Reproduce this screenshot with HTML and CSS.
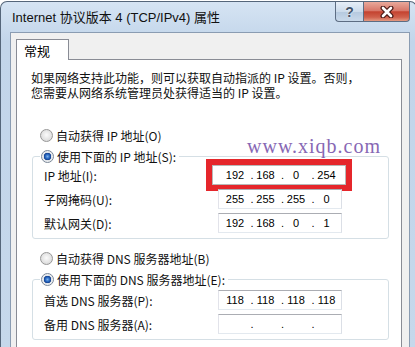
FILE: index.html
```html
<!DOCTYPE html>
<html lang="zh-CN">
<head>
    <meta charset="UTF-8">
    <title>Internet 协议版本 4 (TCP/IPv4) 属性</title>
    <link rel="stylesheet" href="styles.css">
</head>
<body>
    <div class="window">
        <div class="titlebar">
            <span class="title">Internet 协议版本 4 (TCP/IPv4) 属性</span>
            <div class="caption-btns">
                <div class="cap help">?</div>
                <div class="cap close">
                    <svg width="14" height="12" viewBox="0 0 14 12">
                        <path d="M3 2 L11 10 M11 2 L3 10" stroke="#4a1a16" stroke-width="5" stroke-linecap="round"/>
                        <path d="M3 2 L11 10 M11 2 L3 10" stroke="#fff" stroke-width="2.6" stroke-linecap="round"/>
                    </svg>
                </div>
            </div>
        </div>

        <div class="dialog">
            <div class="tabs">
                <div class="tab">常规</div>
            </div>
            <div class="panel">
                <p class="intro">如果网络支持此功能，则可以获取自动指派的 IP 设置。否则，<br>您需要从网络系统管理员处获得适当的 IP 设置。</p>

                <div class="radio-row"><span class="radio"></span>自动获得 IP 地址(O)</div>
                <fieldset class="group">
                    <legend><span class="radio checked"></span>使用下面的 IP 地址(S):</legend>
                    <div class="field-row">
                        <label>IP 地址(I):</label>
                        <div class="ip-box marked"><span>192</span><i>.</i><span>168</span><i>.</i><span>0</span><i>.</i><span>254</span></div>
                    </div>
                    <div class="field-row">
                        <label>子网掩码(U):</label>
                        <div class="ip-box"><span>255</span><i>.</i><span>255</span><i>.</i><span>255</span><i>.</i><span>0</span></div>
                    </div>
                    <div class="field-row">
                        <label>默认网关(D):</label>
                        <div class="ip-box"><span>192</span><i>.</i><span>168</span><i>.</i><span>0</span><i>.</i><span>1</span></div>
                    </div>
                </fieldset>

                <div class="radio-row dns-auto"><span class="radio"></span>自动获得 DNS 服务器地址(B)</div>
                <fieldset class="group dns">
                    <legend><span class="radio checked"></span>使用下面的 DNS 服务器地址(E):</legend>
                    <div class="field-row">
                        <label>首选 DNS 服务器(P):</label>
                        <div class="ip-box"><span>118</span><i>.</i><span>118</span><i>.</i><span>118</span><i>.</i><span>118</span></div>
                    </div>
                    <div class="field-row">
                        <label>备用 DNS 服务器(A):</label>
                        <div class="ip-box"><span></span><i>.</i><span></span><i>.</i><span></span><i>.</i><span></span></div>
                    </div>
                </fieldset>

                <div class="watermark">www.xiqb.com</div>
            </div>
        </div>
    </div>
</body>
</html>
```

FILE: styles.css
```css
html, body { margin: 0; height: 100%; overflow: hidden; background: #fff; }
body { font-family: "Noto Sans CJK SC", sans-serif; font-size: 12px; color: #000; }

.window { box-sizing: border-box; width: 417px; height: 360px; margin-top: 1px; border: 1px solid #55667a; border-bottom: none; border-radius: 7px 7px 0 0; background: linear-gradient(#d6e4f3, #c2d5ea 40px, #c6d8eb); padding: 0 6px 0 9px; }

.titlebar { display: flex; align-items: flex-start; height: 30px; }
.title { padding: 8px 0 0 2px; line-height: 16px; font-family: "Liberation Sans", "Noto Sans CJK SC", sans-serif; font-size: 13px; color: #111; }
.caption-btns { display: flex; margin-left: auto; }
.cap { box-sizing: border-box; height: 20px; display: flex; align-items: center; justify-content: center; border: 1px solid #5d6d83; border-top: none; }
.help { width: 28px; border-right: none; border-radius: 0 0 0 4px; background: linear-gradient(#e6eef7, #ccdbeb 50%, #b5c9df 52%, #c9d9ea); font: bold 14px "Liberation Sans", sans-serif; color: #44556a; text-shadow: 0 0 2px #fff; }
.close { width: 47px; border-radius: 0 0 4px 0; background: linear-gradient(#e9a99b, #d8786a 45%, #c44330 52%, #d0604c 80%, #e39a82); }

.dialog { box-sizing: border-box; height: 330px; border: 1px solid #8a9cb2; border-bottom: none; background: #f0f0f0; }
.tabs { display: flex; padding: 6px 0 0 5px; }
.tab { position: relative; z-index: 1; box-sizing: border-box; width: 53px; height: 21px; margin-bottom: -1px; padding: 2px 0 0 7px; border: 1px solid #898c95; border-bottom: none; background: #fff; font-size: 13px; line-height: 17px; }

.panel { position: relative; height: 320px; margin: 0 7px 0 5px; border: 1px solid #898c95; background: #fff; }

.intro { margin: 10px 0 0 14px; line-height: 15px; color: #111; }

.radio-row { display: flex; align-items: center; gap: 3px; height: 21px; margin: 25px 0 0 23px; color: #111; }
.radio { display: inline-block; box-sizing: border-box; width: 13px; height: 13px; border-radius: 50%; border: 1px solid #979797; background: radial-gradient(circle at 50% 45%, #fbfbfb, #d9d9d9 80%); }
.radio.checked { border-color: #7a8797; background: radial-gradient(circle at 50% 50%, #7db1ea 0, #2c6cc4 2px, #123f8e 3.5px, #dfe3e8 4px, #f7f7f7 6px); }

.group { min-width: 0; margin: 2px 12px 0 15px; padding: 1px 0 5px 11px; border: 1px solid #d5dfe5; border-radius: 3px; }
.group legend { display: flex; align-items: center; gap: 3px; height: 16px; margin-left: -4px; padding: 0 3px 0 1px; color: #111; }

.field-row { display: grid; grid-template-columns: 174px 124px; align-items: center; height: 20px; margin-bottom: 4px; }
.field-row:last-child { margin-bottom: 0; }
.field-row label { color: #111; }

.ip-box { box-sizing: border-box; display: flex; height: 20px; padding-left: 4px; border: 1px solid; border-color: #abadb3 #dbdfe6 #e3e9ef #e2e3ea; background: #fff; font-family: "Liberation Sans", sans-serif; font-size: 11px; line-height: 18px; }
.ip-box span { width: 24px; text-align: center; }
.ip-box i { width: 6.5px; font-style: normal; text-align: right; }
.ip-box.marked { width: 134px; margin-left: -6px; padding-left: 10px; border-color: #b8b8b8; box-shadow: 0 0 0 6px #e5262b; }

.dns-auto { margin-top: 9px; }
.group.dns { padding-top: 3px; }

.watermark { position: absolute; top: 75px; left: 230px; font-family: "Liberation Serif", serif; font-size: 20px; letter-spacing: 1px; color: #8768b4; }
```
